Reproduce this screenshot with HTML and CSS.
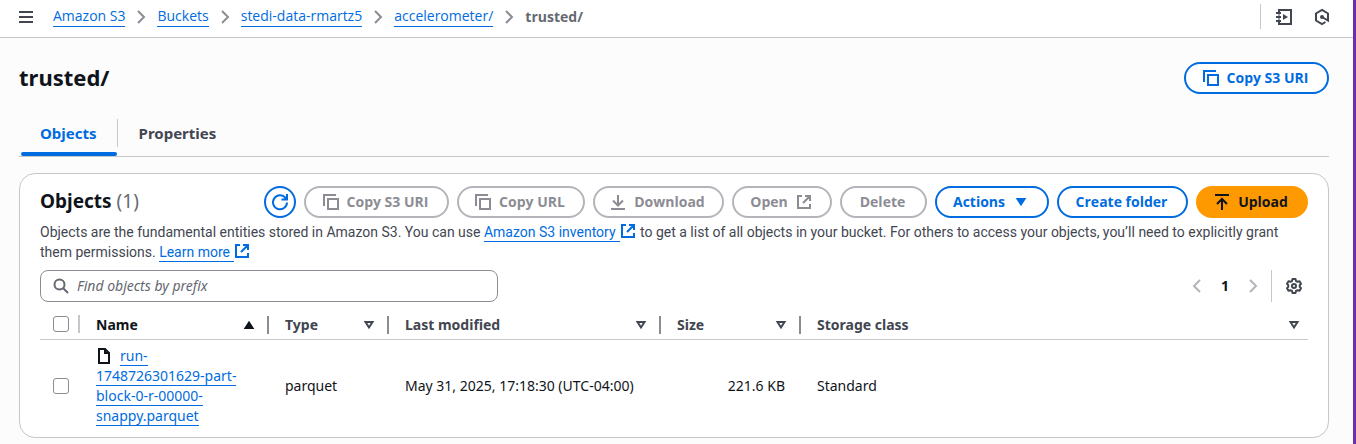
FILE: index.html
```html
<!DOCTYPE html>
<html lang="en">
<head>
<meta charset="utf-8">
<title>trusted/ - S3 bucket</title>
<meta name="viewport" content="width=device-width, initial-scale=1">
<link rel="stylesheet" href="styles.css">
</head>
<body>
<svg class="sprite" aria-hidden="true">
  <symbol id="i-copy" viewBox="0 0 16 16"><path d="M1 12V1h12M5 5h10v10H5z"/></symbol>
  <symbol id="i-ext" viewBox="0 0 16 16"><path d="M6 2H2v12h12v-4M9 2h5v5M7 9l6.500-6.500"/></symbol>
  <symbol id="i-chev" viewBox="0 0 16 16"><path d="m5 2 6 6-6 6"/></symbol>
  <symbol id="i-prev" viewBox="0 0 16 16"><path d="m11 2-6 6 6 6"/></symbol>
  <symbol id="i-down" viewBox="0 0 16 16"><path d="M4.500 5h7L8 10.500z"/></symbol>
</svg>
<div class="page">
  <header class="topbar">
    <button class="icon-btn" aria-label="Open navigation"><svg class="icon" viewBox="0 0 16 16"><path d="M1 3h14M1 8h14M1 13h14"/></svg></button>
    <nav class="crumbs" aria-label="Breadcrumbs">
      <a class="link" href="#">Amazon S3</a><svg class="icon sep"><use href="#i-chev"/></svg>
      <a class="link" href="#">Buckets</a><svg class="icon sep"><use href="#i-chev"/></svg>
      <a class="link" href="#">stedi-data-rmartz5</a><svg class="icon sep"><use href="#i-chev"/></svg>
      <a class="link" href="#">accelerometer/</a><svg class="icon sep"><use href="#i-chev"/></svg>
      <span class="here">trusted/</span>
    </nav>
    <div class="tools">
      <button class="icon-btn" aria-label="Tutorials"><svg class="icon" viewBox="0 0 16 16"><path d="M3 3V1h12v14H3v-2M3 5.500v1M3 9.500v1M0 4h5M0 8h5M0 12h5"/><path class="solid" d="M7 5l5 3-5 3z"/></svg></button>
      <button class="icon-btn" aria-label="Diagnostics"><svg class="icon" viewBox="0 0 16 16"><path d="M11.500 13 8 15l-6-3.500v-7L8 1l6 3.500V11.500L8 8"/><circle class="solid" cx="8" cy="8" r="2"/></svg></button>
    </div>
  </header>
  <main class="content">
    <div class="title-row">
      <h1 class="title">trusted/</h1>
      <button class="btn w-copy"><svg class="icon"><use href="#i-copy"/></svg>Copy S3 URI</button>
    </div>
    <div class="tabs" role="tablist">
      <button class="tab active" role="tab" aria-selected="true">Objects</button>
      <button class="tab" role="tab" aria-selected="false">Properties</button>
    </div>
    <section class="card">
      <div class="card-head">
        <h2 class="card-title">Objects <span class="count">(1)</span></h2>
        <div class="actions">
          <button class="btn round" aria-label="Refresh"><svg class="icon" viewBox="0 0 16 16"><path d="M15 8.500A7 7 0 1 1 13.500 4L14.500 5M15 0v5.500H9.500"/></svg></button>
          <button class="btn w-copy" disabled><svg class="icon"><use href="#i-copy"/></svg>Copy S3 URI</button>
          <button class="btn w-url" disabled><svg class="icon"><use href="#i-copy"/></svg>Copy URL</button>
          <button class="btn w-mid" disabled><svg class="icon" viewBox="0 0 16 16"><path d="M1 15h14M8 1v10M3 6.500l5 5 5-5"/></svg>Download</button>
          <button class="btn w-open" disabled>Open<svg class="icon"><use href="#i-ext"/></svg></button>
          <button class="btn w-del" disabled>Delete</button>
          <button class="btn w-act">Actions<svg class="icon tri"><use href="#i-down"/></svg></button>
          <button class="btn w-mid">Create folder</button>
          <button class="btn primary w-up"><svg class="icon" viewBox="0 0 16 16"><path d="M1 1h14M8 16V5M3 10l5-5 5 5"/></svg>Upload</button>
        </div>
      </div>
      <p class="desc">Objects are the fundamental entities stored in Amazon S3. You can use <a class="link out" href="#">Amazon S3 inventory</a><svg class="icon ext"><use href="#i-ext"/></svg> to get a list of all objects in your bucket. For others to access your objects, you’ll need to explicitly grant<br>them permissions. <a class="link out" href="#">Learn more</a><svg class="icon ext"><use href="#i-ext"/></svg></p>
      <div class="filter-row">
        <label class="search"><svg class="icon" viewBox="0 0 16 16"><circle cx="6.500" cy="6.500" r="5"/><path d="m10 10 5 5"/></svg><input type="text" aria-label="Find objects by prefix" placeholder="Find objects by prefix"></label>
        <div class="pager">
          <button class="icon-btn" aria-label="Previous page" disabled><svg class="icon"><use href="#i-prev"/></svg></button>
          <button class="icon-btn page-no">1</button>
          <button class="icon-btn" aria-label="Next page" disabled><svg class="icon"><use href="#i-chev"/></svg></button>
          <span class="rule"></span>
          <button class="icon-btn" aria-label="Preferences"><svg class="icon gear" viewBox="0 0 16 16"><path d="M6.500 1h3l.5 2 1.500.8 2-.6 1.500 2.600L13.700 7.200v1.600l1.300 1.400-1.500 2.600-2-.6L10 13l-.5 2h-3L6 13l-1.500-.8-2 .6L1 10.200l1.300-1.400V7.200L1 5.800l1.500-2.600 2 .6L6 3z"/><circle cx="8" cy="8" r="2"/></svg></button>
        </div>
      </div>
      <table class="grid">
        <colgroup><col class="c-check"><col class="c-name"><col class="c-type"><col class="c-mod"><col class="c-size"><col></colgroup>
        <thead>
          <tr>
            <th class="check"><input type="checkbox" aria-label="Select all"></th>
            <th class="sorted"><div class="th">Name<svg class="icon tri" viewBox="0 0 16 16"><path d="M8 5.500l3.500 5.500h-7z"/></svg></div></th>
            <th><div class="th">Type<svg class="icon"><use href="#i-down"/></svg></div></th>
            <th><div class="th">Last modified<svg class="icon"><use href="#i-down"/></svg></div></th>
            <th><div class="th">Size<svg class="icon"><use href="#i-down"/></svg></div></th>
            <th><div class="th">Storage class<svg class="icon"><use href="#i-down"/></svg></div></th>
          </tr>
        </thead>
        <tbody>
          <tr>
            <td class="check"><input type="checkbox" aria-label="Select object"></td>
            <td><svg class="icon file" viewBox="0 0 16 16"><path d="M3 1h6l4 4v10H3zM9 1v4h4"/></svg><a class="link" href="#">run-<wbr>1748726301629-part-<wbr>block-0-r-00000-<wbr>snappy.parquet</a></td>
            <td>parquet</td>
            <td>May 31, 2025, 17:18:30 (UTC-04:00)</td>
            <td class="num">221.6 KB</td>
            <td>Standard</td>
          </tr>
        </tbody>
      </table>
    </section>
  </main>
</div>
</body>
</html>
```
FILE: styles.css
```css
* { box-sizing: border-box; }
body {
  margin: 0;
  background: #fcfcfd;
  color: #0f141a;
  font: 14px/20px "Noto Sans", "Open Sans", sans-serif;
}
button, input { font: inherit; color: inherit; }
button { background: none; border: 0; padding: 0; }
.sprite { display: none; }
.page { min-height: 100vh; border-right: 3px solid #6b2fae; }
.icon { width: 16px; height: 16px; flex: none; fill: none; stroke: currentColor; stroke-width: 2; overflow: visible; }
.tri, .solid { fill: currentColor; }
.solid { stroke: none; }
.gear { stroke-linejoin: round; }
.link { color: #006ce0; text-decoration: none; border-bottom: 1px solid #006ce0; }
.out { padding-right: 4px; }

.topbar { display: flex; align-items: center; height: 38px; padding: 0 23px 4px 18px; background: #fff; border-bottom: 1px solid #c6c6cd; }
.icon-btn { display: flex; align-items: center; justify-content: center; color: #424650; }
.icon-btn:disabled { color: #b4b4bb; }
.crumbs { display: flex; align-items: center; margin-left: 19px; font-family: "Open Sans", sans-serif; }
.sep { margin: 0 8px; color: #8c8c94; }
.here { color: #656871; font-weight: 700; }
.tools { display: flex; align-items: center; gap: 22px; height: 25px; margin-left: auto; padding-left: 15px; border-left: 1px solid #c6c6cd; }

.content { padding: 24px 24px 6px 19px; }
.title-row { display: flex; align-items: center; justify-content: space-between; }
.title { margin: 0; font-size: 22px; line-height: 30px; padding-bottom: 2px; }
.btn {
  display: flex; align-items: center; justify-content: center; gap: 8px;
  height: 32px; padding-right: 2px; border: 2px solid #006ce0; border-radius: 16px;
  background: #fff; color: #006ce0; font-family: "Open Sans", sans-serif; font-weight: 700; white-space: nowrap;
}
.btn:disabled { border-color: #b4b4bb; color: #8c8c94; }
.btn.round { width: 32px; padding: 0; }
.w-copy { width: 145px; }
.w-url { width: 128px; }
.w-mid { width: 131px; }
.w-open { width: 100px; }
.w-del { width: 87px; }
.w-act { width: 114px; }
.w-up { width: 112px; }
.btn.primary { background: #ff9900; border-color: #ff9900; color: #0f141a; }

.tabs { display: flex; margin-top: 16px; border-bottom: 1px solid #c6c6cd; }
.tab { position: relative; height: 46px; padding: 0 21px; font-size: 15px; font-weight: 700; color: #424650; }
.tab.active { color: #006ce0; }
.tab.active::before { content: ""; position: absolute; right: 0; top: 9px; height: 28px; border-right: 1px solid #c6c6cd; }
.tab.active::after { content: ""; position: absolute; left: 2px; right: 1px; bottom: 0; height: 4px; border-radius: 2px; background: #006ce0; }

.card { margin-top: 16px; padding: 12px 20px 5px; background: #fff; border: 1px solid #c6c6cd; border-radius: 16px; }
.card-head { display: flex; align-items: center; justify-content: space-between; }
.card-title { margin: 0; padding-bottom: 2px; font-size: 19px; line-height: 24px; }
.count { color: #656871; font-weight: 400; }
.actions { display: flex; gap: 8px; }
.desc { margin: 4px 0 8px; color: #424650; font-family: Roboto, sans-serif; }
.desc .link { padding-bottom: 1px; }
.ext { margin-right: 1px; color: #006ce0; vertical-align: -2px; }
.filter-row { display: flex; align-items: center; justify-content: space-between; }
.search { display: flex; align-items: center; gap: 8px; width: 458px; height: 32px; padding: 0 12px; border: 1px solid #8c8c94; border-radius: 8px; color: #656871; }
.search input { flex: 1; border: 0; padding: 0; outline: 0; background: none; }
.search input::placeholder { color: #656871; font-style: italic; opacity: 1; }
.pager { display: flex; align-items: center; padding-right: 6px; }
.page-no { width: 40px; font-weight: 700; color: #0f141a; }
.rule { height: 32px; margin: 0 14px 0 10px; border-left: 1px solid #c6c6cd; }

.grid { width: 100%; margin-top: 8px; table-layout: fixed; border-collapse: collapse; }
.c-check { width: 40px; }
.c-name { width: 189px; }
.c-type { width: 120px; }
.c-mod { width: 272px; }
.c-size { width: 140px; }
th { height: 29px; padding: 1px 0 0; border-bottom: 1px solid #c6c6cd; text-align: left; color: #424650; }
th.sorted { color: #0f141a; }
.th { display: flex; align-items: center; justify-content: space-between; height: 18px; padding: 0 10px 0 16px; border-right: 2px solid #8c8c94; }
th:last-child .th { padding-right: 6px; border-right: 0; }
td { padding: 6px 16px; }
td.num { text-align: right; }
.check { padding: 0 0 0 13px; }
th.check { background: linear-gradient(#c6c6cd, #c6c6cd) right 0 center / 2px 18px no-repeat; }
.check input { display: block; appearance: none; width: 16px; height: 16px; margin: 0; border: 1px solid #8c8c94; border-radius: 3px; background: #fff; }
.file { margin-right: 8px; vertical-align: -3px; }
```
